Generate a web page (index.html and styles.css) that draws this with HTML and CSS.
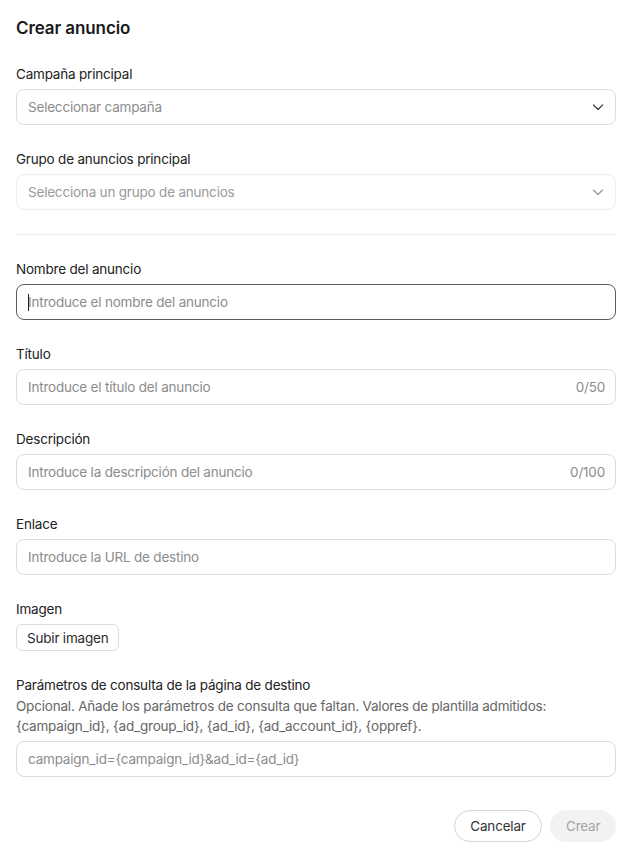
FILE: index.html
```html
<!DOCTYPE html>
<html lang="es">
<head>
<meta charset="utf-8">
<title>Crear anuncio</title>
<link rel="stylesheet" href="styles.css">
</head>
<body>
<div class="dialog">
  <h1 class="title">Crear anuncio</h1>

  <div class="field">
    <label class="label">Campaña principal</label>
    <div class="control select">
      <span class="ph">Seleccionar campaña</span>
      <svg class="chev" width="12" height="12" viewBox="0 0 12 12"><path d="M1.5 4l4.5 4.5L10.5 4" fill="none" stroke="currentColor" stroke-width="1.3" stroke-linecap="round" stroke-linejoin="round"/></svg>
    </div>
  </div>

  <div class="field">
    <label class="label">Grupo de anuncios principal</label>
    <div class="control select disabled">
      <span class="ph">Selecciona un grupo de anuncios</span>
      <svg class="chev" width="12" height="12" viewBox="0 0 12 12"><path d="M1.5 4l4.5 4.5L10.5 4" fill="none" stroke="currentColor" stroke-width="1.3" stroke-linecap="round" stroke-linejoin="round"/></svg>
    </div>
  </div>

  <hr class="divider">

  <div class="field">
    <label class="label">Nombre del anuncio</label>
    <div class="control focused">
      <span class="caret"></span>
      <span class="ph">Introduce el nombre del anuncio</span>
    </div>
  </div>

  <div class="field">
    <label class="label">Título</label>
    <div class="control">
      <span class="ph">Introduce el título del anuncio</span>
      <span class="count">0/50</span>
    </div>
  </div>

  <div class="field">
    <label class="label">Descripción</label>
    <div class="control">
      <span class="ph">Introduce la descripción del anuncio</span>
      <span class="count">0/100</span>
    </div>
  </div>

  <div class="field">
    <label class="label">Enlace</label>
    <div class="control">
      <span class="ph">Introduce la URL de destino</span>
    </div>
  </div>

  <div class="field">
    <label class="label">Imagen</label>
    <div><button class="upload">Subir imagen</button></div>
  </div>

  <div class="field">
    <div class="label-group">
      <label class="label">Parámetros de consulta de la página de destino</label>
      <p class="help">Opcional. Añade los parámetros de consulta que faltan. Valores de plantilla admitidos: {campaign_id}, {ad_group_id}, {ad_id}, {ad_account_id}, {oppref}.</p>
    </div>
    <div class="control">
      <span class="ph">campaign_id={campaign_id}&amp;ad_id={ad_id}</span>
    </div>
  </div>

  <div class="footer">
    <button class="btn btn-outline">Cancelar</button>
    <button class="btn btn-disabled">Crear</button>
  </div>
</div>
</body>
</html>
```
FILE: styles.css
```css
* { box-sizing: border-box; }
html, body { margin: 0; padding: 0; background: #fff; }
body {
  font-family: Inter, "Noto Sans", "Liberation Sans", sans-serif;
  color: #1f1f1f;
  font-size: 13.5px;
  letter-spacing: -0.2px;
  line-height: 20px;
}
.dialog {
  width: 633px;
  padding: 16px 17px 16px 16px;
  display: flex;
  flex-direction: column;
  gap: 24px;
}
.title {
  margin: 0;
  font-size: 17px;
  line-height: 24px;
  font-weight: 600;
  letter-spacing: -0.1px;
  color: #1a1a1a;
}
.field {
  display: flex;
  flex-direction: column;
  gap: 5px;
}
.label {
  line-height: 20px;
  color: #222;
}
.label-group { display: flex; flex-direction: column; gap: 1px; }
.help {
  margin: 0;
  color: #666;
  line-height: 20px;
}
.control {
  position: relative;
  height: 36px;
  border: 1px solid #dcdcdc;
  border-radius: 8px;
  display: flex;
  align-items: center;
  justify-content: space-between;
  padding: 0 10px 0 11px;
  background: #fff;
}
.ph { color: #8c8c8c; }
.count { color: #8c8c8c; }
.select .chev { color: #444; margin-right: 1px; }
.select.disabled { border-color: #ececec; }
.select.disabled .ph { color: #9a9a9a; }
.select.disabled .chev { color: #9a9a9a; }
.focused { border-color: #5e5e5e; }
.caret {
  position: absolute;
  left: 11px;
  top: 9px;
  width: 1px;
  height: 17px;
  background: #222;
}
.divider {
  margin: 0;
  border: 0;
  border-top: 1px solid #ededed;
  height: 0;
}
.upload {
  font-family: inherit;
  font-size: 13.5px;
  letter-spacing: -0.2px;
  line-height: 20px;
  color: #2a2a2a;
  background: #fff;
  border: 1px solid #dcdcdc;
  border-radius: 6px;
  height: 27px;
  padding: 0 10px;
  cursor: pointer;
}
.footer {
  display: flex;
  justify-content: flex-end;
  gap: 8px;
  margin-top: 9px;
}
.btn {
  font-family: inherit;
  font-size: 13.5px;
  letter-spacing: -0.2px;
  height: 32px;
  border-radius: 16px;
  padding: 0 15px;
}
.btn-outline {
  background: #fff;
  border: 1px solid #d4d4d4;
  color: #333;
  width: 88px;
}
.btn-disabled {
  background: #f2f2f2;
  border: 1px solid #f2f2f2;
  color: #a5a5a5;
  width: 66px;
}
```
